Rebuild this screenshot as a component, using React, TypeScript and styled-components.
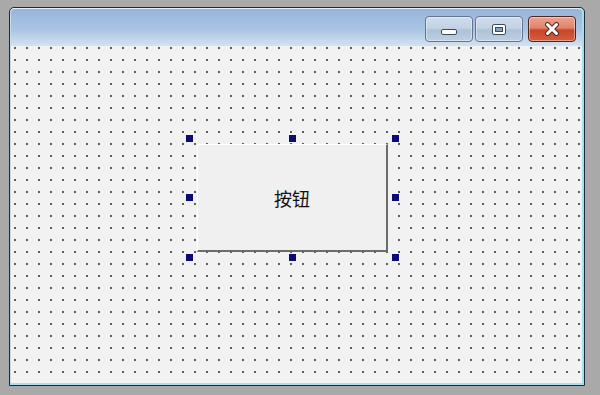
import React from 'react';
import styled, { createGlobalStyle } from 'styled-components';

const Global = createGlobalStyle`
  html, body { margin: 0; padding: 0; }
  body { font-family: "Noto Sans CJK SC", "Noto Sans", sans-serif; }
`;

const Desktop = styled.div`
  width: 600px;
  height: 395px;
  background: #a9a9a9;
  padding: 7px 0 0 9px;
  box-sizing: border-box;
  overflow: hidden;
`;

const Window = styled.div`
  width: 576px;
  height: 379px;
  box-sizing: border-box;
  border: 1px solid #1e2a33;
  border-radius: 5px 5px 0 0;
  background: #c9dbee;
  display: flex;
  flex-direction: column;
  padding: 0 2px 2px 1px;
  box-shadow: inset 0 -2px 0 #a9e0f0, inset -2px 0 0 #a9dcec;
`;

const TitleBar = styled.div`
  height: 38px;
  flex: none;
  display: flex;
  justify-content: flex-end;
  align-items: flex-start;
  padding: 7px 6px 0 0;
  box-sizing: border-box;
  border-top: 1px solid #e4eef8;
  border-radius: 4px 4px 0 0;
  background: linear-gradient(#97b5da, #aac4e3 55%, #d3e2f1);
`;

const CaptionGroup = styled.div`
  display: flex;
  gap: 2px;
`;

const CaptionButton = styled.div<{ $close?: boolean; $w: number }>`
  width: ${p => p.$w}px;
  height: 26px;
  box-sizing: border-box;
  border: 1px solid ${p => (p.$close ? '#4b2620' : '#62778f')};
  border-radius: 4px;
  display: flex;
  align-items: center;
  justify-content: center;
  background: ${p =>
    p.$close
      ? 'linear-gradient(#eba391, #e0846b 45%, #c8452a 55%, #d65e3d)'
      : 'linear-gradient(#cfdcea, #c3d3e5 45%, #adc1d7 55%, #bfd0e3)'};
  box-shadow: inset 0 0 0 1px rgba(255, 255, 255, 0.4);
`;

const MinGlyph = styled.div`
  width: 16px;
  height: 6px;
  margin-top: 6px;
  box-sizing: border-box;
  background: #fff;
  border: 1px solid #3c4c5e;
  border-radius: 2px;
`;

const MaxGlyph = styled.div`
  width: 14px;
  height: 11px;
  box-sizing: border-box;
  background: #fff;
  border: 1px solid #3c4c5e;
  border-radius: 2px;
  display: flex;
  align-items: center;
  justify-content: center;
  &::after {
    content: '';
    width: 8px;
    height: 5px;
    border: 1px solid #3c4c5e;
    box-sizing: border-box;
    background: #8aa0b8;
  }
`;

const Client = styled.div`
  flex: 1;
  position: relative;
  background-color: #f2f2f2;
  background-image: conic-gradient(at 2px 2px, #f2f2f2 75%, #5e5e5e 0);
  background-size: 12px 12px;
  background-position: 3px 1px;
`;

const FormButton = styled.div`
  position: absolute;
  left: 186px;
  top: 98px;
  width: 191px;
  height: 108px;
  box-sizing: border-box;
  background: #f0f0f0;
  border-top: 1px solid #ffffff;
  border-left: 1px solid #ffffff;
  border-right: 2px solid #6b6b6b;
  border-bottom: 2px solid #6b6b6b;
  display: flex;
  align-items: center;
  justify-content: center;
  font-family: "Noto Sans CJK SC", sans-serif;
  font-size: 18px;
  color: #111;
`;

const Handle = styled.div<{ $x: number; $y: number }>`
  position: absolute;
  left: ${p => p.$x}px;
  top: ${p => p.$y}px;
  width: 7px;
  height: 7px;
  background: #0a0a78;
`;

const handleX = [175, 278, 381];
const handleY = [89, 148, 208];

const CloseIcon = () => (
  <svg width="18" height="14" viewBox="0 0 18 14">
    <path d="M4.5 2.5 L13.5 11.5 M13.5 2.5 L4.5 11.5" stroke="#5a2a20" strokeWidth="5" strokeLinecap="round" />
    <path d="M4.5 2.5 L13.5 11.5 M13.5 2.5 L4.5 11.5" stroke="#ffffff" strokeWidth="3" strokeLinecap="round" />
  </svg>
);

export default function App() {
  return (
    <>
      <Global />
      <Desktop>
        <Window>
          <TitleBar>
            <CaptionGroup>
              <CaptionButton $w={48}><MinGlyph /></CaptionButton>
              <CaptionButton $w={48}><MaxGlyph /></CaptionButton>
            </CaptionGroup>
            <CaptionButton $close $w={48} style={{ marginLeft: 5 }}><CloseIcon /></CaptionButton>
          </TitleBar>
          <Client>
            <FormButton>按钮</FormButton>
            {handleY.map(y =>
              handleX.map(x =>
                x === 278 && y === 148 ? null : <Handle key={`${x}-${y}`} $x={x} $y={y} />
              )
            )}
          </Client>
        </Window>
      </Desktop>
    </>
  );
}
